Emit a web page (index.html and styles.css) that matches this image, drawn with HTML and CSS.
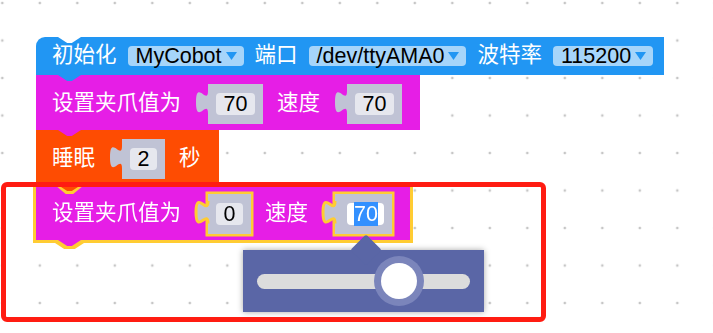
FILE: index.html
```html
<!DOCTYPE html>
<html>
	<head>
		<meta charset="utf-8">
		<title>Blockly 工作区</title>
		<link rel="stylesheet" href="styles.css">
	</head>
	<body>
		<div class="workspace">
			<div class="stack">
				<div class="block block-init">
					<span class="label">初始化</span>
					<span class="dropdown">MyCobot<svg class="arrow" viewBox="0 0 11 8"><polygon points="0,0 11,0 5.5,8"/></svg></span>
					<span class="label">端口</span>
					<span class="dropdown">/dev/ttyAMA0<svg class="arrow" viewBox="0 0 11 8"><polygon points="0,0 11,0 5.5,8"/></svg></span>
					<span class="label">波特率</span>
					<span class="dropdown">115200<svg class="arrow" viewBox="0 0 11 8"><polygon points="0,0 11,0 5.5,8"/></svg></span>
				</div>
				<div class="block block-gripper">
					<span class="label">设置夹爪值为</span>
					<span class="input">
						<svg class="tab" viewBox="0 0 13 40"><path class="fill" d="M16,7 L13,7 c0,15 -12,-12 -12,11.25 s12,-3.75 12,11.25 L16,29.5 Z"/><path class="edge" d="M13,7 c0,15 -12,-12 -12,11.25 s12,-3.75 12,11.25"/></svg>
						<span class="shadow"><span class="num">70</span></span>
					</span>
					<span class="label">速度</span>
					<span class="input">
						<svg class="tab" viewBox="0 0 13 40"><path class="fill" d="M16,7 L13,7 c0,15 -12,-12 -12,11.25 s12,-3.75 12,11.25 L16,29.5 Z"/><path class="edge" d="M13,7 c0,15 -12,-12 -12,11.25 s12,-3.75 12,11.25"/></svg>
						<span class="shadow"><span class="num">70</span></span>
					</span>
				</div>
				<div class="block block-sleep">
					<span class="label">睡眠</span>
					<span class="input">
						<svg class="tab" viewBox="0 0 13 40"><path class="fill" d="M16,7 L13,7 c0,15 -12,-12 -12,11.25 s12,-3.75 12,11.25 L16,29.5 Z"/><path class="edge" d="M13,7 c0,15 -12,-12 -12,11.25 s12,-3.75 12,11.25"/></svg>
						<span class="shadow"><span class="num">2</span></span>
					</span>
					<span class="label">秒</span>
				</div>
				<div class="block block-gripper selected">
					<span class="label">设置夹爪值为</span>
					<span class="input">
						<svg class="tab" viewBox="0 0 13 40"><path class="fill" d="M16,7 L13,7 c0,15 -12,-12 -12,11.25 s12,-3.75 12,11.25 L16,29.5 Z"/><path class="edge" d="M13,7 c0,15 -12,-12 -12,11.25 s12,-3.75 12,11.25"/></svg>
						<span class="shadow"><span class="num">0</span></span>
					</span>
					<span class="label">速度</span>
					<span class="input">
						<svg class="tab" viewBox="0 0 13 40"><path class="fill" d="M16,7 L13,7 c0,15 -12,-12 -12,11.25 s12,-3.75 12,11.25 L16,29.5 Z"/><path class="edge" d="M13,7 c0,15 -12,-12 -12,11.25 s12,-3.75 12,11.25"/></svg>
						<span class="shadow"><span class="num editing"><span class="sel">70</span></span></span>
					</span>
				</div>
			</div>
			<!-- 滑块下拉框 -->
			<div class="slider-popup">
				<div class="track"><span class="thumb" style="left:66.7%"></span></div>
			</div>
			<div class="highlight"></div>
		</div>
	</body>
</html>
```

FILE: styles.css
```css
*{margin:0;padding:0;box-sizing:border-box;}
body{font-family:"Liberation Sans","Noto Sans CJK SC",sans-serif;background:#fff;}
.workspace{
	position:relative;
	width:713px;
	height:333px;
	overflow:hidden;
	background-color:#fff;
	background-image:radial-gradient(circle,#c6c6c6 1px,rgba(198,198,198,0) 1.7px);
	background-size:37.5px 37.5px;
	background-position:-16.45px -15.75px;
}
.stack{
	display:flex;
	flex-direction:column;
	align-items:flex-start;
	padding:37px 0 0 36px;
}
.block{
	position:relative;
	display:flex;
	align-items:center;
	gap:14px;
	padding:9px 18px 6px 16px;
	color:#fff;
}
/* 下方连接凸起 */
.block::after{
	content:"";
	position:absolute;
	z-index:1;
	left:22px;
	top:100%;
	width:23px;
	height:6px;
	background:inherit;
	clip-path:polygon(0 0,100% 0,60% 100%,40% 100%);
}
.block-init{
	height:38px;
	padding:0 11px 0 16px;
	gap:11px;
	background:#2196f3;
	border-top-left-radius:9px;
}
.block-init::before{
	content:"";
	position:absolute;
	left:22px;
	top:0;
	width:23px;
	height:6px;
	background:#fff;
	clip-path:polygon(0 0,100% 0,60% 100%,40% 100%);
}
.block-gripper{background:#e61ee6;}
.block-sleep{background:#fe4c02;}
.selected{
	filter:drop-shadow(3px 0 0 #fc3) drop-shadow(-3px 0 0 #fc3) drop-shadow(0 3px 0 #fc3) drop-shadow(0 -3px 0 #fc3);
}
.selected::before{
	content:"";
	position:absolute;
	left:19px;
	top:0;
	width:29px;
	height:9px;
	background:#fc3;
	clip-path:polygon(0 0,100% 0,63% 100%,37% 100%);
}
.label{
	font-size:21.5px;
	line-height:1;
	white-space:nowrap;
}
.dropdown{
	display:flex;
	align-items:center;
	height:20px;
	padding:0 7px 0 8px;
	border-radius:4px;
	background:#a6d5fa;
	color:#000;
	font-size:21.5px;
	line-height:20px;
	white-space:nowrap;
}
.dropdown .arrow{
	display:block;
	width:11px;
	height:8px;
	margin-left:4px;
	fill:#2196f3;
}
.input{display:flex;align-items:center;}
.tab{
	position:relative;
	z-index:1;
	display:block;
	width:13px;
	height:40px;
	overflow:visible;
}
.tab .fill{fill:#c0c3d5;}
.tab .edge{fill:none;stroke:none;}
.selected .tab .edge{stroke:#fc3;stroke-width:3;}
.shadow{
	display:flex;
	align-items:center;
	height:40px;
	padding:0 8px;
	background:#c0c3d5;
}
.selected .shadow{box-shadow:0 0 0 2.5px #fc3;}
.num{
	height:22px;
	padding:0 7.5px;
	border-radius:4px;
	background:#e6e7ee;
	color:#000;
	font-size:21.5px;
	line-height:22px;
}
.num.editing{background:#fff;margin-left:4px;padding:0 6px 0 7px;}
.num .sel{background:#3390ff;color:#fff;}
.slider-popup{
	position:absolute;
	z-index:5;
	left:243px;
	top:250px;
	width:241px;
	height:62px;
	display:flex;
	align-items:center;
	padding:0 14px;
	background:#5a66a6;
	box-shadow:0 0 6px rgba(0,0,0,.35);
}
.slider-popup::before{
	content:"";
	position:absolute;
	left:112px;
	top:-11px;
	width:22px;
	height:22px;
	background:#5a66a6;
	border-radius:2px;
	transform:rotate(45deg);
}
.track{
	position:relative;
	flex:1;
	height:15px;
	border-radius:8px;
	background:#dcdcdc;
}
.thumb{
	position:absolute;
	top:50%;
	width:36px;
	height:36px;
	border-radius:50%;
	background:#fff;
	box-shadow:0 0 0 7px #7b85bb;
	transform:translate(-50%,-50%);
}
.highlight{
	position:absolute;
	z-index:10;
	left:1px;
	top:182px;
	width:545px;
	height:140px;
	border:5px solid #ff1c12;
	border-radius:6px;
}
```
